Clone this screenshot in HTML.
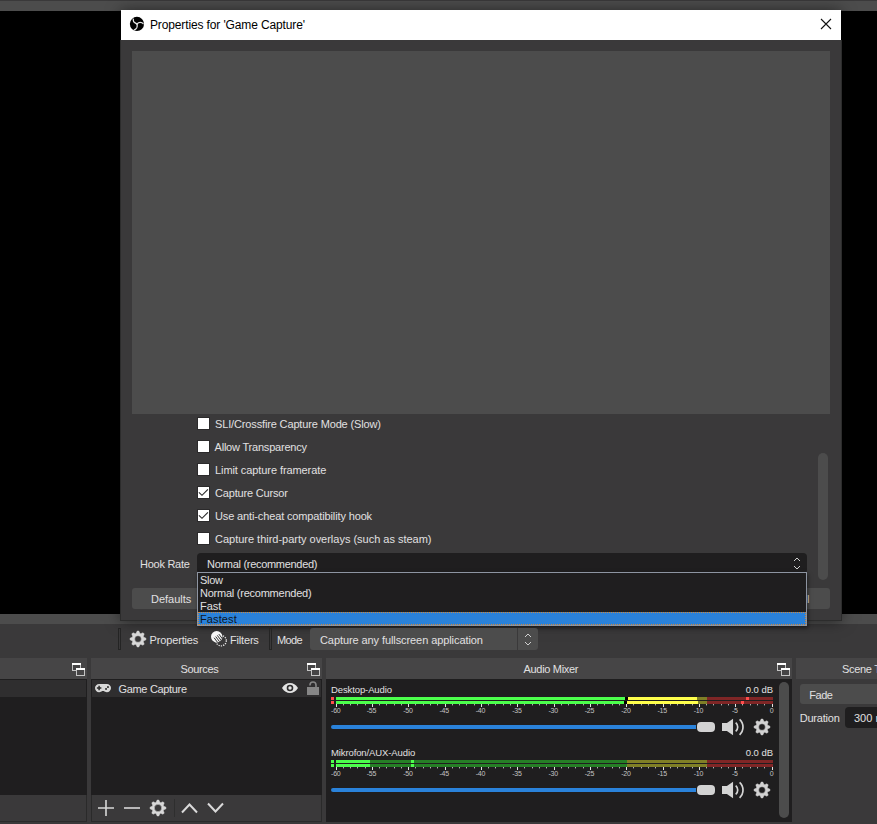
<!DOCTYPE html>
<html lang="en">
<head>
<meta charset="utf-8">
<title>Properties for 'Game Capture'</title>
<style>
*{box-sizing:border-box;margin:0;padding:0}
html,body{width:877px;height:824px;overflow:hidden}
body{position:relative;background:#3a393a;color:#e1e0e1;font-family:"Liberation Sans",sans-serif;font-size:11px;line-height:14px}
.a{position:absolute}
.t{position:absolute;white-space:nowrap;line-height:14px;height:14px}
.blk{background:#000}
.dk{background:#1f1e1f}
.hd{background:#464546}
.btn{background:#4c4c4c;border-radius:3px}
.cb{position:absolute;left:197px;width:13px;height:13px;background:#fff;border:1px solid #2b2a2b}
.cbl{left:214px}
svg{position:absolute;overflow:visible}
.tk{position:absolute;font-size:7px;line-height:8px;height:8px;color:#c4c4c4;text-align:center;white-space:nowrap;letter-spacing:-.2px}
</style>
</head>
<body>
<!-- main window top strip -->
<div class="a" style="left:0;top:1px;width:877px;height:623px;background:#4c4c4c"></div>
<!-- main preview (black) -->
<div class="a blk" style="left:0;top:11px;width:877px;height:603px"></div>

<!-- ================= dialog ================= -->
<div id="dlg" class="a" style="left:121px;top:10px;width:720px;height:610px;background:#3a393a;box-shadow:0 1px 14px rgba(0,0,0,.55)">
  <div class="a" style="left:0;top:0;width:720px;height:30px;background:#fff"></div>
</div>
<div class="a" style="left:120px;top:40px;width:722px;height:581px;border:1px solid #2c2c2c;border-top:0"></div>
<!-- title bar content -->
<svg style="left:127px;top:14px" width="20" height="20" viewBox="0 0 20 20">
  <circle cx="9.950" cy="9.950" r="7.100" fill="#000"/>
  <g fill="none" stroke="#e6e6e6" stroke-width="1.250" stroke-linecap="round">
    <path d="M10 10C8.500 9 7 8.600 6.600 7.600C6.300 6.800 6.300 5.800 6.300 5"/>
    <path d="M10 10C11 8.800 12 8.300 13.200 8.300C14.600 8.300 15.600 8.800 16.200 9.800"/>
    <path d="M10 10C10.400 11.500 10.400 12.600 9.800 13.800C9.200 14.900 8.400 15.500 7.400 15.900"/>
  </g>
</svg>
<div class="t" style="left:150px;top:18px;font-size:12px;color:#000;letter-spacing:-.13px" id="ttl">Properties for 'Game Capture'</div>
<svg style="left:821px;top:19px" width="10" height="10" viewBox="0 0 10 10"><path d="M0 0L10 10M10 0L0 10" stroke="#111" stroke-width="1.1" fill="none"/></svg>

<!-- dialog preview -->
<div class="a" style="left:132px;top:51px;width:698px;height:363px;background:#4c4c4c"></div>

<!-- checkboxes -->
<div class="cb" style="top:417px"></div><div class="t cbl" style="top:417px;left:215px;letter-spacing:-.144px" id="c1">SLI/Crossfire Capture Mode (Slow)</div>
<div class="cb" style="top:440px"></div><div class="t cbl" style="top:440px;left:214.500px;letter-spacing:-.2px" id="c2">Allow Transparency</div>
<div class="cb" style="top:463px"></div><div class="t cbl" style="top:463px;left:215px;letter-spacing:-.08px" id="c3">Limit capture framerate</div>
<div class="cb" style="top:486px"></div><div class="t cbl" style="top:486px;left:215px;letter-spacing:-.177px" id="c4">Capture Cursor</div>
<div class="cb" style="top:509px"></div><div class="t cbl" style="top:509px;left:215px;letter-spacing:-.134px" id="c5">Use anti-cheat compatibility hook</div>
<div class="cb" style="top:532px"></div><div class="t cbl" style="top:532px;left:215px;letter-spacing:-.012px" id="c6">Capture third-party overlays (such as steam)</div>
<svg style="left:198px;top:487px" width="12" height="12" viewBox="0 0 12 12"><path d="M.9 5.300L4 8.300L9.900 2.300" stroke="#2a2a2a" stroke-width="1.150" fill="none"/></svg>
<svg style="left:198px;top:510px" width="12" height="12" viewBox="0 0 12 12"><path d="M.9 5.300L4 8.300L9.900 2.300" stroke="#2a2a2a" stroke-width="1.150" fill="none"/></svg>

<!-- hook rate -->
<div class="t" style="left:140px;top:557px;letter-spacing:-.26px" id="hr">Hook Rate</div>
<div class="a dk" style="left:197px;top:553px;width:610px;height:21px;border-radius:4px"></div>
<div class="t" style="left:207px;top:557px;letter-spacing:-.3px" id="hv">Normal (recommended)</div>
<svg style="left:793px;top:557px" width="8" height="13" viewBox="0 0 8 13"><path d="M1 4L4 1L7 4M1 9L4 12L7 9" stroke="#d0d0d0" stroke-width="1" fill="none"/></svg>

<!-- dialog scrollbar -->
<div class="a" style="left:818px;top:453px;width:10px;height:127px;background:#4c4c4c;border-radius:5px"></div>

<!-- buttons -->
<div class="a btn" style="left:132px;top:588px;width:80px;height:21px"></div>
<div class="t" style="left:151px;top:592px" id="df">Defaults</div>
<div class="a btn" style="left:675px;top:588px;width:76px;height:21px"></div>
<div class="t" style="left:705px;top:592px" id="ok">OK</div>
<div class="a btn" style="left:757px;top:588px;width:73px;height:21px"></div>
<div class="t" style="left:759.5px;top:592px;width:50px;text-align:right" id="cn">Cancel</div>

<!-- popup list -->
<div class="a" style="left:197px;top:572px;width:610px;height:54px;background:#1f1e1f;border:1px solid #8d94a1;box-shadow:1px 2px 4px rgba(0,0,0,.5)"></div>
<div class="a" style="left:198px;top:612px;width:608px;height:13px;background:#2a82da;outline:1px dotted #d0883a;outline-offset:-1px"></div>
<div class="t" style="left:200px;top:574px;line-height:13px;height:13px;letter-spacing:-.3px" id="p1">Slow</div>
<div class="t" style="left:200px;top:587px;line-height:13px;height:13px;letter-spacing:-.24px" id="p2">Normal (recommended)</div>
<div class="t" style="left:200px;top:600px;line-height:13px;height:13px" id="p3">Fast</div>
<div class="t" style="left:200px;top:613px;line-height:13px;height:13px;color:#10151c;letter-spacing:.12px" id="p4">Fastest</div>

<!-- ================= main window toolbar ================= -->
<div class="a" style="left:118px;top:628px;width:3px;height:22px;border:1px solid #242424"></div>
<div class="t" style="left:149.500px;top:633px;letter-spacing:-.144px" id="tp">Properties</div>
<div class="t" style="left:230px;top:633px;letter-spacing:-.18px" id="tf">Filters</div>
<div class="a" style="left:269px;top:628px;width:3px;height:22px;border:1px solid #242424"></div>
<div class="t" style="left:277px;top:633px;letter-spacing:-.6px" id="tm">Mode</div>
<div class="a btn" style="left:310px;top:628px;width:228px;height:22px"></div>
<div class="a" style="left:517px;top:628px;width:1px;height:22px;background:#3a393a"></div>
<div class="t" style="left:320px;top:633px;letter-spacing:-.085px" id="tc">Capture any fullscreen application</div>
<svg style="left:524px;top:633px" width="8" height="13" viewBox="0 0 8 13"><path d="M1 4L4 1L7 4M1 9L4 12L7 9" stroke="#d0d0d0" stroke-width="1" fill="none"/></svg>

<!-- ================= docks ================= -->
<!-- scenes dock (left, cut off) -->
<div class="a hd" style="left:0;top:658px;width:87px;height:21px"></div>
<div class="a dk" style="left:0;top:679px;width:87px;height:116px"></div>
<div class="a" style="left:0;top:680px;width:86px;height:17px;background:#2f2e2f"></div>

<!-- sources dock -->
<div class="a hd" style="left:91px;top:658px;width:231px;height:21px"></div>
<div class="t" style="left:180.500px;top:662px;letter-spacing:-.35px" id="sh">Sources</div>
<div class="a dk" style="left:91px;top:679px;width:231px;height:116px"></div>
<div class="a" style="left:92px;top:680px;width:229px;height:17px;background:#2f2e2f"></div>
<div class="t" style="left:118.500px;top:682px;letter-spacing:-.327px" id="gc">Game Capture</div>

<!-- audio mixer dock -->
<div class="a hd" style="left:326px;top:658px;width:466px;height:21px"></div>
<div class="t" style="left:523.500px;top:662px;letter-spacing:-.31px" id="am">Audio Mixer</div>
<div class="a dk" style="left:326px;top:679px;width:466px;height:143px"></div>
<div class="a" style="left:779px;top:682px;width:10px;height:136px;background:#4c4c4c;border-radius:5px"></div>

<!-- MIXER-START -->
<!-- mixer channels -->
<div class="t" style="left:331px;top:683px;font-size:9.5px;letter-spacing:-.11px" id="m1">Desktop-Audio</div>
<div class="t" style="left:713px;top:683px;width:60px;text-align:right;font-size:9.5px;letter-spacing:-.03px" id="m1db">0.0 dB</div>
<div class="a" style="left:331px;top:697px;width:3px;height:3px;background:#ff4c4c"></div>
<div class="a" style="left:336px;top:697px;width:437px;height:3px;background:linear-gradient(90deg,#267f26 0 291px,#7f7f26 291px 371px,#7f2626 371px)"></div>
<div class="a" style="left:336px;top:697px;width:361px;height:3px;background:linear-gradient(90deg,#4cff4c 0 291px,#ffff4c 291px 371px,#ff4c4c 371px);background-size:437px 3px;background-repeat:no-repeat"></div>
<div class="a" style="left:746px;top:697px;width:3px;height:3px;background:#ff4c4c"></div>
<div class="a" style="left:331px;top:701px;width:3px;height:3px;background:#ff4c4c"></div>
<div class="a" style="left:336px;top:701px;width:437px;height:3px;background:linear-gradient(90deg,#267f26 0 291px,#7f7f26 291px 371px,#7f2626 371px)"></div>
<div class="a" style="left:336px;top:701px;width:362px;height:3px;background:linear-gradient(90deg,#4cff4c 0 291px,#ffff4c 291px 371px,#ff4c4c 371px);background-size:437px 3px;background-repeat:no-repeat"></div>
<div class="a" style="left:741px;top:701px;width:3px;height:3px;background:#ff4c4c"></div>
<div class="a" style="left:625px;top:697px;width:3px;height:3px;background:#000"></div>
<div class="a" style="left:624px;top:701px;width:3px;height:3px;background:#000"></div>
<svg style="left:331px;top:704px" width="446" height="4" shape-rendering="crispEdges"><g fill="none" stroke-width="1" transform="translate(.5 0)"><path d="M5 0v3M41 0v3M77 0v3M114 0v3M150 0v3M186 0v3M223 0v3M259 0v3M295 0v3M332 0v3M368 0v3M404 0v3M441 0v3" stroke="#e4e4e4"/><path d="M12 0v1M19 0v1M26 0v1M34 0v1M48 0v1M55 0v1M63 0v1M70 0v1M84 0v1M92 0v1M99 0v1M106 0v1M121 0v1M128 0v1M135 0v1M143 0v1M157 0v1M164 0v1M172 0v1M179 0v1M193 0v1M201 0v1M208 0v1M215 0v1M230 0v1M237 0v1M244 0v1M252 0v1M266 0v1M273 0v1M281 0v1M288 0v1M302 0v1M310 0v1M317 0v1M324 0v1M339 0v1M346 0v1M353 0v1M361 0v1M375 0v1M382 0v1M390 0v1M397 0v1M411 0v1M419 0v1M426 0v1M433 0v1" stroke="#b0b0b0"/><path d="M12 1v1M19 1v1M26 1v1M34 1v1M48 1v1M55 1v1M63 1v1M70 1v1M84 1v1M92 1v1M99 1v1M106 1v1M121 1v1M128 1v1M135 1v1M143 1v1M157 1v1M164 1v1M172 1v1M179 1v1M193 1v1M201 1v1M208 1v1M215 1v1M230 1v1M237 1v1M244 1v1M252 1v1M266 1v1M273 1v1M281 1v1M288 1v1M302 1v1M310 1v1M317 1v1M324 1v1M339 1v1M346 1v1M353 1v1M361 1v1M375 1v1M382 1v1M390 1v1M397 1v1M411 1v1M419 1v1M426 1v1M433 1v1" stroke="#585858"/></g></svg>
<div class="tk" style="left:331px;top:707px;text-align:left;width:14px">-60</div>
<div class="tk" style="left:361.5px;top:707px;width:20px">-55</div>
<div class="tk" style="left:397.9px;top:707px;width:20px">-50</div>
<div class="tk" style="left:434.2px;top:707px;width:20px">-45</div>
<div class="tk" style="left:470.5px;top:707px;width:20px">-40</div>
<div class="tk" style="left:506.9px;top:707px;width:20px">-35</div>
<div class="tk" style="left:543.2px;top:707px;width:20px">-30</div>
<div class="tk" style="left:579.5px;top:707px;width:20px">-25</div>
<div class="tk" style="left:615.9px;top:707px;width:20px">-20</div>
<div class="tk" style="left:652.2px;top:707px;width:20px">-15</div>
<div class="tk" style="left:688.5px;top:707px;width:20px">-10</div>
<div class="tk" style="left:724.9px;top:707px;width:20px">-5</div>
<div class="tk" style="left:763.4px;top:707px;text-align:right;width:10px">0</div>
<div class="a" style="left:331px;top:725px;width:368px;height:4px;background:#2a82da;border-radius:2px"></div>
<div class="a" style="left:697px;top:722px;width:18px;height:10px;background:#d2d2d2;border-radius:4px;box-shadow:0 0 0 1px #1f1e1f"></div>
<div class="t" style="left:331px;top:746px;font-size:9.5px;letter-spacing:-.11px" id="m2">Mikrofon/AUX-Audio</div>
<div class="t" style="left:713px;top:746px;width:60px;text-align:right;font-size:9.5px;letter-spacing:-.03px" id="m2db">0.0 dB</div>
<div class="a" style="left:331px;top:760px;width:3px;height:3px;background:#4cff4c"></div>
<div class="a" style="left:336px;top:760px;width:437px;height:3px;background:linear-gradient(90deg,#267f26 0 291px,#7f7f26 291px 371px,#7f2626 371px)"></div>
<div class="a" style="left:336px;top:760px;width:34px;height:3px;background:linear-gradient(90deg,#4cff4c 0 291px,#ffff4c 291px 371px,#ff4c4c 371px);background-size:437px 3px;background-repeat:no-repeat"></div>
<div class="a" style="left:411px;top:760px;width:3px;height:3px;background:#4cff4c"></div>
<div class="a" style="left:331px;top:764px;width:3px;height:3px;background:#4cff4c"></div>
<div class="a" style="left:336px;top:764px;width:437px;height:3px;background:linear-gradient(90deg,#267f26 0 291px,#7f7f26 291px 371px,#7f2626 371px)"></div>
<div class="a" style="left:336px;top:764px;width:34px;height:3px;background:linear-gradient(90deg,#4cff4c 0 291px,#ffff4c 291px 371px,#ff4c4c 371px);background-size:437px 3px;background-repeat:no-repeat"></div>
<div class="a" style="left:411px;top:764px;width:3px;height:3px;background:#4cff4c"></div>
<svg style="left:331px;top:767px" width="446" height="4" shape-rendering="crispEdges"><g fill="none" stroke-width="1" transform="translate(.5 0)"><path d="M5 0v3M41 0v3M77 0v3M114 0v3M150 0v3M186 0v3M223 0v3M259 0v3M295 0v3M332 0v3M368 0v3M404 0v3M441 0v3" stroke="#e4e4e4"/><path d="M12 0v1M19 0v1M26 0v1M34 0v1M48 0v1M55 0v1M63 0v1M70 0v1M84 0v1M92 0v1M99 0v1M106 0v1M121 0v1M128 0v1M135 0v1M143 0v1M157 0v1M164 0v1M172 0v1M179 0v1M193 0v1M201 0v1M208 0v1M215 0v1M230 0v1M237 0v1M244 0v1M252 0v1M266 0v1M273 0v1M281 0v1M288 0v1M302 0v1M310 0v1M317 0v1M324 0v1M339 0v1M346 0v1M353 0v1M361 0v1M375 0v1M382 0v1M390 0v1M397 0v1M411 0v1M419 0v1M426 0v1M433 0v1" stroke="#b0b0b0"/><path d="M12 1v1M19 1v1M26 1v1M34 1v1M48 1v1M55 1v1M63 1v1M70 1v1M84 1v1M92 1v1M99 1v1M106 1v1M121 1v1M128 1v1M135 1v1M143 1v1M157 1v1M164 1v1M172 1v1M179 1v1M193 1v1M201 1v1M208 1v1M215 1v1M230 1v1M237 1v1M244 1v1M252 1v1M266 1v1M273 1v1M281 1v1M288 1v1M302 1v1M310 1v1M317 1v1M324 1v1M339 1v1M346 1v1M353 1v1M361 1v1M375 1v1M382 1v1M390 1v1M397 1v1M411 1v1M419 1v1M426 1v1M433 1v1" stroke="#585858"/></g></svg>
<div class="tk" style="left:331px;top:770px;text-align:left;width:14px">-60</div>
<div class="tk" style="left:361.5px;top:770px;width:20px">-55</div>
<div class="tk" style="left:397.9px;top:770px;width:20px">-50</div>
<div class="tk" style="left:434.2px;top:770px;width:20px">-45</div>
<div class="tk" style="left:470.5px;top:770px;width:20px">-40</div>
<div class="tk" style="left:506.9px;top:770px;width:20px">-35</div>
<div class="tk" style="left:543.2px;top:770px;width:20px">-30</div>
<div class="tk" style="left:579.5px;top:770px;width:20px">-25</div>
<div class="tk" style="left:615.9px;top:770px;width:20px">-20</div>
<div class="tk" style="left:652.2px;top:770px;width:20px">-15</div>
<div class="tk" style="left:688.5px;top:770px;width:20px">-10</div>
<div class="tk" style="left:724.9px;top:770px;width:20px">-5</div>
<div class="tk" style="left:763.4px;top:770px;text-align:right;width:10px">0</div>
<div class="a" style="left:331px;top:788px;width:368px;height:4px;background:#2a82da;border-radius:2px"></div>
<div class="a" style="left:697px;top:785px;width:18px;height:10px;background:#d2d2d2;border-radius:4px;box-shadow:0 0 0 1px #1f1e1f"></div>
<!-- MIXER-END -->

<!-- scene transitions dock -->
<div class="a hd" style="left:796px;top:658px;width:81px;height:21px"></div>
<div class="t" style="left:842px;top:662px;letter-spacing:-.3px" id="st">Scene Transitions</div>
<div class="a btn" style="left:800px;top:684px;width:90px;height:20px"></div>
<div class="t" style="left:809.300px;top:688px;letter-spacing:-.5px" id="fd">Fade</div>
<div class="t" style="left:799.700px;top:711px;letter-spacing:-.2px" id="du">Duration</div>
<div class="a dk" style="left:845px;top:707px;width:60px;height:21px;border-radius:4px"></div>
<div class="t" style="left:854px;top:711px" id="ms">300 ms</div>

<!-- ICONS-START -->
<svg style="left:130px;top:631px" width="16" height="16" viewBox="0 0 16 16"><path fill-rule="evenodd" fill="#d8d8d8" stroke-linejoin="round" stroke-width=".5" stroke="#d8d8d8" d="M6.19 2.28L7.18 0.04L8.82 0.04L9.81 2.28L10.77 2.68L13.05 1.80L14.20 2.95L13.32 5.23L13.72 6.19L15.96 7.18L15.96 8.82L13.72 9.81L13.32 10.77L14.20 13.05L13.05 14.20L10.77 13.32L9.81 13.72L8.82 15.96L7.18 15.96L6.19 13.72L5.23 13.32L2.95 14.20L1.80 13.05L2.68 10.77L2.28 9.81L0.04 8.82L0.04 7.18L2.28 6.19L2.68 5.23L1.80 2.95L2.95 1.80L5.23 2.68ZM11.35 8.00A3.35 3.35 0 1 0 4.65 8.00A3.35 3.35 0 1 0 11.35 8.00Z"/></svg>
<svg style="left:211px;top:631px" width="17" height="17" viewBox="0 0 17 17">
<defs><clipPath id="fc"><circle cx="5.700" cy="5.700" r="5.600"/></clipPath></defs>
<circle cx="10.100" cy="9.700" r="5.200" fill="none" stroke="#e4e4e4" stroke-width="1.300" stroke-dasharray="1.250 1.084"/>
<circle cx="5.700" cy="5.700" r="5.700" fill="#f6f6f6"/>
<g clip-path="url(#fc)" stroke="#333" stroke-width="1" fill="none"><path d="M7.88 3.14L12.32 9.06M6.28 4.34L10.72 10.26M4.68 5.54L9.12 11.46M3.08 6.74L7.52 12.66"/></g>
</svg>
<svg style="left:72px;top:663px" width="13" height="13" viewBox="0 0 13 13" shape-rendering="crispEdges"><path fill="#c4c4c4" fill-rule="evenodd" d="M0 0h9v8h-9zM1 2v5h7v-5z"/><path fill="#fff" d="M0 0h9v2h-9z"/><path fill="#464546" d="M4 5h5v3h-5z"/><path fill="#c4c4c4" fill-rule="evenodd" d="M4 5h9v8h-9zM5 7v5h7v-5z"/><path fill="#fff" d="M4 5h9v2h-9z"/></svg>
<svg style="left:307px;top:663px" width="13" height="13" viewBox="0 0 13 13" shape-rendering="crispEdges"><path fill="#c4c4c4" fill-rule="evenodd" d="M0 0h9v8h-9zM1 2v5h7v-5z"/><path fill="#fff" d="M0 0h9v2h-9z"/><path fill="#464546" d="M4 5h5v3h-5z"/><path fill="#c4c4c4" fill-rule="evenodd" d="M4 5h9v8h-9zM5 7v5h7v-5z"/><path fill="#fff" d="M4 5h9v2h-9z"/></svg>
<svg style="left:777px;top:663px" width="13" height="13" viewBox="0 0 13 13" shape-rendering="crispEdges"><path fill="#c4c4c4" fill-rule="evenodd" d="M0 0h9v8h-9zM1 2v5h7v-5z"/><path fill="#fff" d="M0 0h9v2h-9z"/><path fill="#464546" d="M4 5h5v3h-5z"/><path fill="#c4c4c4" fill-rule="evenodd" d="M4 5h9v8h-9zM5 7v5h7v-5z"/><path fill="#fff" d="M4 5h9v2h-9z"/></svg>
<svg style="left:95px;top:684px" width="16" height="9" viewBox="0 0 16 9">
<path fill="#d8d8d8" d="M4.2 0h7.6A4.1 4.1 0 0 1 16 4.1 4.1 4.1 0 0 1 11.8 8.2c-1.3 0-2.2-.5-2.9-1.2H7.100c-.7.700-1.600 1.200-2.900 1.200A4.100 4.100 0 0 1 0 4.100 4.100 4.100 0 0 1 4.200 0z"/>
<path fill="#2a2a2a" d="M3.350 1.800h1.500v1.500h1.500v1.500h-1.500v1.500h-1.500v-1.500h-1.500v-1.500h1.500z"/>
<rect x="12.100" y="2.200" width="1.700" height="1.700" fill="#222"/><rect x="10.200" y="4.100" width="1.700" height="1.700" fill="#222"/>
</svg>
<svg style="left:282px;top:683px" width="16" height="10" viewBox="0 0 16 10">
<path fill="#e4e4e4" d="M0 5C2 1.600 5 0 8 0s6 1.600 8 5c-2 3.400-5 5-8 5S2 8.400 0 5z"/>
<circle cx="8" cy="5" r="3.300" fill="#2d2c2d"/><circle cx="8" cy="5" r="1.700" fill="#e4e4e4"/>
</svg>
<svg style="left:307px;top:681px" width="12" height="14" viewBox="0 0 12 14">
<rect x="0" y="6" width="12" height="8" fill="#868686"/>
<path d="M3 4.500V4a3 3 0 0 1 6 0v2.500" fill="none" stroke="#868686" stroke-width="1.600"/>
</svg>
<div class="a" style="left:91px;top:795px;width:231px;height:27px;background:#3a393a;border:1px solid #2a2a2a;border-top:0"></div>
<div class="a" style="left:0;top:795px;width:87px;height:27px;background:#3a393a;border:1px solid #2a2a2a;border-top:0;border-left:0"></div>
<svg style="left:98px;top:800px" width="16" height="16" viewBox="0 0 16 16"><path d="M8 0v16M0 8h16" stroke="#d8d8d8" stroke-width="1.600" fill="none"/></svg>
<svg style="left:124px;top:800px" width="16" height="16" viewBox="0 0 16 16"><path d="M0 8h16" stroke="#d8d8d8" stroke-width="1.600" fill="none"/></svg>
<svg style="left:150px;top:800px" width="16" height="16" viewBox="0 0 16 16"><path fill-rule="evenodd" fill="#d8d8d8" stroke-linejoin="round" stroke-width=".5" stroke="#d8d8d8" d="M6.19 2.28L7.18 0.04L8.82 0.04L9.81 2.28L10.77 2.68L13.05 1.80L14.20 2.95L13.32 5.23L13.72 6.19L15.96 7.18L15.96 8.82L13.72 9.81L13.32 10.77L14.20 13.05L13.05 14.20L10.77 13.32L9.81 13.72L8.82 15.96L7.18 15.96L6.19 13.72L5.23 13.32L2.95 14.20L1.80 13.05L2.68 10.77L2.28 9.81L0.04 8.82L0.04 7.18L2.28 6.19L2.68 5.23L1.80 2.95L2.95 1.80L5.23 2.68ZM11.70 8.00A3.7 3.7 0 1 0 4.30 8.00A3.7 3.7 0 1 0 11.70 8.00Z"/></svg>
<div class="a" style="left:174px;top:799px;width:1px;height:18px;background:#2e2e2e"></div>
<svg style="left:181px;top:803px" width="17" height="10" viewBox="0 0 17 10"><path d="M1 9.500L8.500 1.500L16 9.500" stroke="#dadada" stroke-width="2" fill="none"/></svg>
<svg style="left:207px;top:803px" width="17" height="10" viewBox="0 0 17 10"><path d="M1 .5L8.500 8.500L16 .5" stroke="#dadada" stroke-width="2" fill="none"/></svg>
<svg style="left:722px;top:719px" width="23" height="17" viewBox="0 0 23 17">
<path fill="#d4d4d4" d="M0 3.900h4.900L11.050-.2v16.450L4.900 12.100H0z"/>
<path d="M13.700 3.650A5.700 5.700 0 0 1 13.700 12.350M17.600.3A10.550 10.550 0 0 1 17.600 15.800" fill="none" stroke="#d4d4d4" stroke-width="1.700"/></svg>
<svg style="left:754px;top:719px" width="16" height="16" viewBox="0 0 16 16"><path fill-rule="evenodd" fill="#d2d2d2" stroke-linejoin="round" stroke-width=".5" stroke="#d2d2d2" d="M6.19 2.28L7.18 0.04L8.82 0.04L9.81 2.28L10.77 2.68L13.05 1.80L14.20 2.95L13.32 5.23L13.72 6.19L15.96 7.18L15.96 8.82L13.72 9.81L13.32 10.77L14.20 13.05L13.05 14.20L10.77 13.32L9.81 13.72L8.82 15.96L7.18 15.96L6.19 13.72L5.23 13.32L2.95 14.20L1.80 13.05L2.68 10.77L2.28 9.81L0.04 8.82L0.04 7.18L2.28 6.19L2.68 5.23L1.80 2.95L2.95 1.80L5.23 2.68ZM11.35 8.00A3.35 3.35 0 1 0 4.65 8.00A3.35 3.35 0 1 0 11.35 8.00Z"/></svg>
<svg style="left:722px;top:782px" width="23" height="17" viewBox="0 0 23 17">
<path fill="#d4d4d4" d="M0 3.900h4.900L11.050-.2v16.450L4.900 12.100H0z"/>
<path d="M13.700 3.650A5.700 5.700 0 0 1 13.700 12.350M17.600.3A10.550 10.550 0 0 1 17.600 15.800" fill="none" stroke="#d4d4d4" stroke-width="1.700"/></svg>
<svg style="left:754px;top:782px" width="16" height="16" viewBox="0 0 16 16"><path fill-rule="evenodd" fill="#d2d2d2" stroke-linejoin="round" stroke-width=".5" stroke="#d2d2d2" d="M6.19 2.28L7.18 0.04L8.82 0.04L9.81 2.28L10.77 2.68L13.05 1.80L14.20 2.95L13.32 5.23L13.72 6.19L15.96 7.18L15.96 8.82L13.72 9.81L13.32 10.77L14.20 13.05L13.05 14.20L10.77 13.32L9.81 13.72L8.82 15.96L7.18 15.96L6.19 13.72L5.23 13.32L2.95 14.20L1.80 13.05L2.68 10.77L2.28 9.81L0.04 8.82L0.04 7.18L2.28 6.19L2.68 5.23L1.80 2.95L2.95 1.80L5.23 2.68ZM11.35 8.00A3.35 3.35 0 1 0 4.65 8.00A3.35 3.35 0 1 0 11.35 8.00Z"/></svg>
<!-- ICONS-END -->
</body>
</html>
